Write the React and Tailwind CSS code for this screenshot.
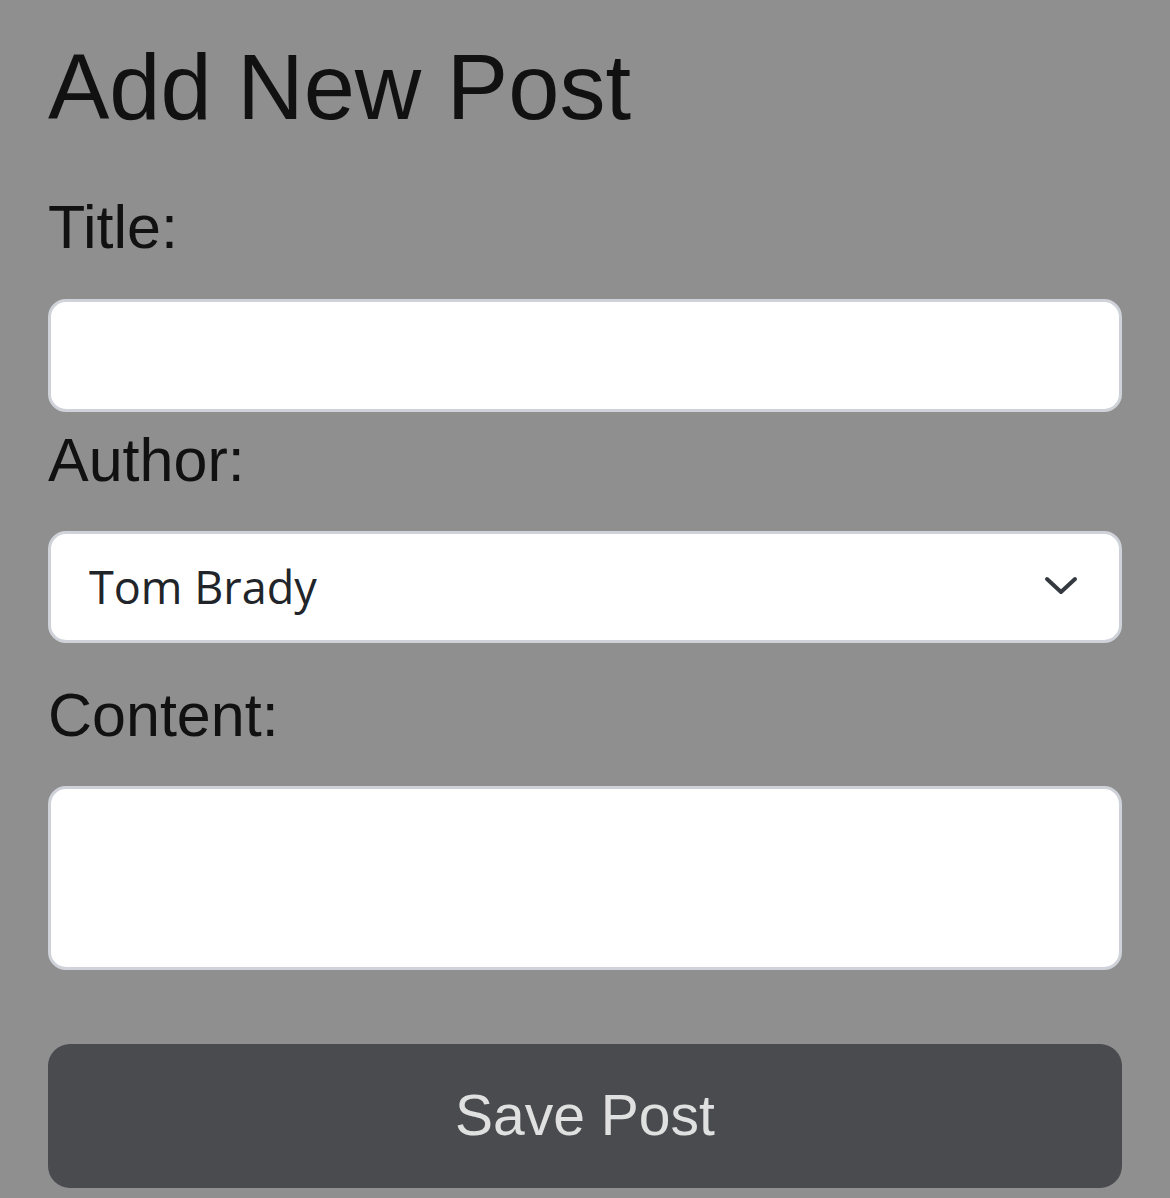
import React from "react";

export default function App() {
  return (
    <div className="min-h-[1198px] w-full bg-[#8f8f8f] px-[48px] pt-[33px] pb-[10px] font-['Liberation_Sans',Arial,sans-serif] text-[#111111]">
      <h1 className="text-[92px] leading-[109px] font-normal">Add New Post</h1>
      <form className="flex flex-col" onSubmit={(e) => e.preventDefault()}>
        <label htmlFor="title" className="mt-[49px] text-[61px] leading-[72px]">Title:</label>
        <input
          id="title"
          type="text"
          className="mt-[36px] h-[113px] w-full rounded-[18px] border-[3px] border-[#cfd3d9] bg-white px-[40px] text-[45px] outline-none"
        />
        <label htmlFor="author" className="mt-[12px] text-[61px] leading-[72px]">Author:</label>
        <div className="relative mt-[35px]">
          <select
            id="author"
            defaultValue="Tom Brady"
            className="h-[112px] w-full appearance-none rounded-[18px] border-[3px] border-[#cfd3d9] bg-white pl-[38px] font-['Open_Sans',sans-serif] text-[45px] text-[#212529] outline-none"
          >
            <option>Tom Brady</option>
          </select>
          <svg
            className="pointer-events-none absolute right-[44px] top-[44px]"
            width="34"
            height="22"
            viewBox="0 0 34 22"
            fill="none"
          >
            <path d="M3 4 L17 17 L31 4" stroke="#343a40" strokeWidth="4" strokeLinecap="round" strokeLinejoin="round" />
          </svg>
        </div>
        <label htmlFor="content" className="mt-[36px] text-[61px] leading-[72px]">Content:</label>
        <textarea
          id="content"
          className="mt-[35px] h-[184px] w-full resize-none rounded-[18px] border-[3px] border-[#cfd3d9] bg-white px-[40px] py-[20px] text-[45px] outline-none"
        />
        <button
          type="submit"
          className="mt-[74px] h-[144px] w-full rounded-[22px] bg-[#4a4b4f] text-[57px] text-[#e0e0e0]"
        >
          Save Post
        </button>
      </form>
    </div>
  );
}
